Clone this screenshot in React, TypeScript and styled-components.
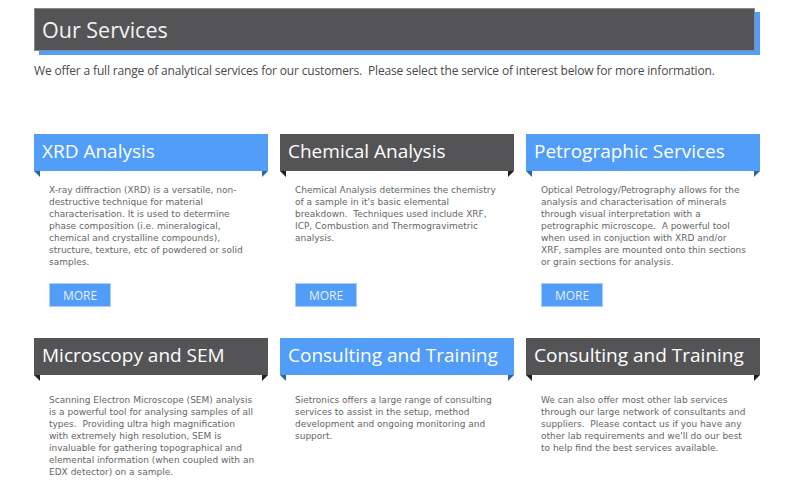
import styled, { createGlobalStyle } from "styled-components";

const GlobalStyle = createGlobalStyle`
  html, body {
    margin: 0;
    padding: 0;
    background: #fff;
  }
  body {
    font-family: "Open Sans", "Liberation Sans", sans-serif;
  }
`;

const BLUE = "#519df7";
const BLUE_DARK = "#2c63a3";
const GREY = "#545456";
const GREY_DARK = "#1f1f20";

type Service = {
  title: string;
  text: string;
  tone: "blue" | "grey";
  more?: boolean;
};

const topRow: Service[] = [
  {
    title: "XRD Analysis",
    tone: "blue",
    more: true,
    text: "X-ray diffraction (XRD) is a versatile, non-destructive technique for material characterisation. It is used to determine phase composition (i.e. mineralogical, chemical and crystalline compounds), structure, texture, etc of powdered or solid samples.",
  },
  {
    title: "Chemical Analysis",
    tone: "grey",
    more: true,
    text: "Chemical Analysis determines the chemistry of a sample in it's basic elemental breakdown.\u00a0 Techniques used include XRF, ICP, Combustion and Thermogravimetric analysis.",
  },
  {
    title: "Petrographic Services",
    tone: "blue",
    more: true,
    text: "Optical Petrology/Petrography allows for the analysis and characterisation of minerals through visual interpretation with a petrographic microscope.\u00a0 A powerful tool when used in conjuction with XRD and/or XRF, samples are mounted onto thin sections or grain sections for analysis.",
  },
];

const bottomRow: Service[] = [
  {
    title: "Microscopy and SEM",
    tone: "grey",
    text: "Scanning Electron Microscope (SEM) analysis is a powerful tool for analysing samples of all types.\u00a0 Providing ultra high magnification with extremely high resolution, SEM is invaluable for gathering topographical and elemental information (when coupled with an EDX detector) on a sample.",
  },
  {
    title: "Consulting and Training",
    tone: "blue",
    text: "Sietronics offers a large range of consulting services to assist in the setup, method development and ongoing monitoring and support.",
  },
  {
    title: "Consulting and Training",
    tone: "grey",
    text: "We can also offer most other lab services through our large network of consultants and suppliers.\u00a0 Please contact us if you have any other lab requirements and we'll do our best to help find the best services available.",
  },
];

export default function App() {
  return (
    <>
      <GlobalStyle />
      <Page>
        <PageHeader>
          <h1>Our Services</h1>
        </PageHeader>
        <Intro>
          We offer a full range of analytical services for our customers.&nbsp; Please select the
          service of interest below for more information.
        </Intro>
        <Grid $top={55}>
          {topRow.map((s, i) => (
            <ServiceCard key={i} service={s} lead={13} />
          ))}
        </Grid>
        <Grid $top={31}>
          {bottomRow.map((s, i) => (
            <ServiceCard key={i} service={s} lead={19} />
          ))}
        </Grid>
      </Page>
    </>
  );
}

function ServiceCard({ service, lead }: { service: Service; lead: number }) {
  const { title, text, tone, more } = service;
  return (
    <Card>
      <Ribbon $tone={tone}>
        <h2>{title}</h2>
      </Ribbon>
      <Body $lead={lead}>{text}</Body>
      {more && <MoreButton href="#">MORE</MoreButton>}
    </Card>
  );
}

const Page = styled.div`
  width: 726px;
  padding: 8px 0 0 34px;
`;

const PageHeader = styled.div`
  width: 719px;
  height: 41px;
  padding-bottom: 1px;
  box-sizing: content-box;
  height: 40px;
  background: ${GREY};
  border: 1px solid #8a8a8c;
  box-shadow: 5px 4px 0 ${BLUE};
  display: flex;
  align-items: center;

  h1 {
    margin: 0 0 0 7px;
    font-size: 21.5px;
    font-weight: 400;
    color: #f2f2f2;
  }
`;

const Intro = styled.p`
  margin: 12px 0 0;
  font-size: 12px;
  line-height: 16px;
  letter-spacing: -0.16px;
  color: #4a4a4a;
`;

const Grid = styled.div<{ $top: number }>`
  margin-top: ${(p) => p.$top}px;
  display: grid;
  grid-template-columns: repeat(3, 234px);
  column-gap: 12px;
`;

const Card = styled.div`
  display: flex;
  flex-direction: column;
`;

const Ribbon = styled.div<{ $tone: "blue" | "grey" }>`
  position: relative;
  height: 33px;
  padding-bottom: 4px;
  background: ${(p) => (p.$tone === "blue" ? BLUE : GREY)};
  display: flex;
  align-items: center;

  h2 {
    margin: 0 0 0 8px;
    font-size: 19px;
    font-weight: 400;
    color: #fff;
    white-space: nowrap;
  }

  &::before,
  &::after {
    content: "";
    position: absolute;
    top: 37px;
    width: 6px;
    height: 6px;
    background: ${(p) => (p.$tone === "blue" ? BLUE_DARK : GREY_DARK)};
  }
  &::before {
    left: 0;
    clip-path: polygon(0 0, 100% 0, 100% 100%);
  }
  &::after {
    right: 0;
    clip-path: polygon(0 0, 100% 0, 0 100%);
  }
`;

const Body = styled.p<{ $lead: number }>`
  margin: ${(p) => p.$lead}px 0 15px;
  padding: 0 12px 0 15px;
  font-family: "DejaVu Sans", Verdana, sans-serif;
  font-size: 9px;
  line-height: 12px;
  color: #666;
`;

const MoreButton = styled.a`
  margin: auto 0 0 15px;
  width: 60px;
  height: 22px;
  box-sizing: content-box;
  border: 1px solid #a9cdf8;
  background: ${BLUE};
  color: #e6f0ff;
  font-size: 12px;
  text-decoration: none;
  display: flex;
  align-items: center;
  justify-content: center;
`;
